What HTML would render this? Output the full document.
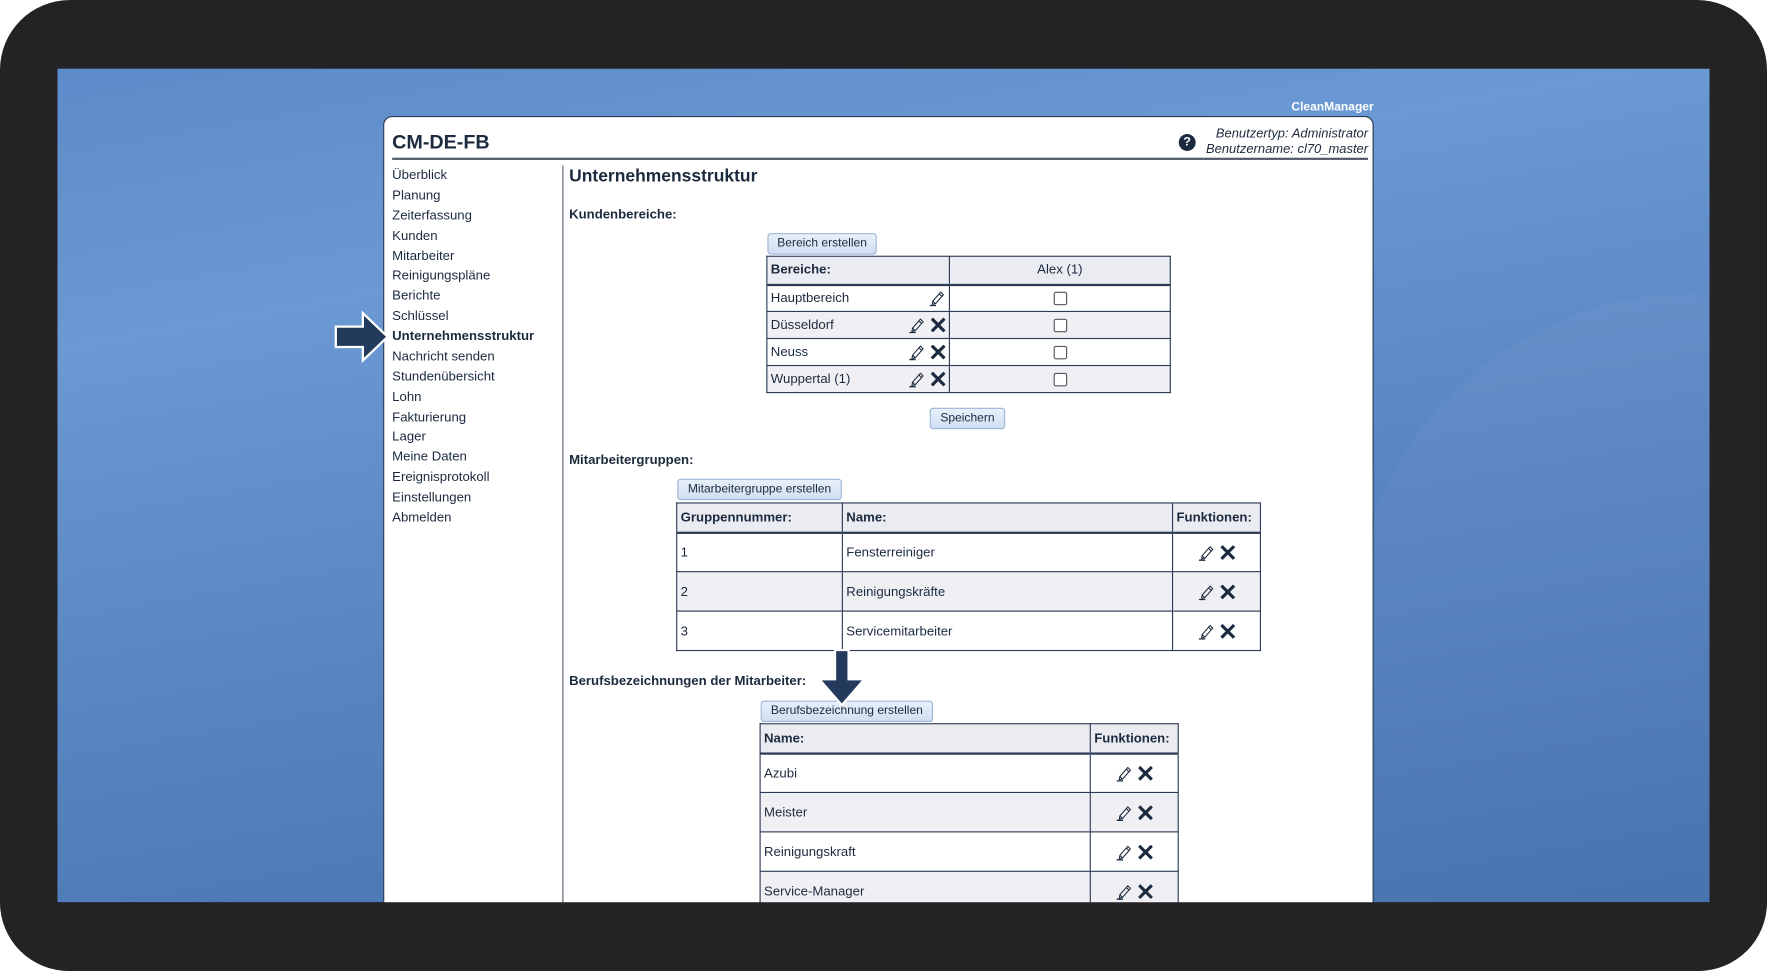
<!DOCTYPE html>
<html><head><meta charset="utf-8"><style>
html,body{margin:0;padding:0;background:#fff;width:1767px;height:971px;overflow:hidden}
#s{position:absolute;left:0;top:0;width:1568px;height:862px;overflow:hidden;transform:scale(1.12691,1.12645);transform-origin:0 0;font-family:"Liberation Sans",sans-serif;color:#1c2a3e}
.a{position:absolute}
.frame{left:0;top:0;width:1568px;height:862px;background:#232224;border-radius:62px}
.blue{left:51px;top:61px;width:1466px;height:740px;overflow:hidden;background:linear-gradient(170deg,#5d8bc9 0%,#6b99d3 25%,#5a86c3 55%,#426fad 100%)}
.panel{left:340px;top:103px;width:877px;height:720px;background:#fff;border:1px solid #2b3a55;border-radius:8px 8px 0 0}
.nav{left:348px;font-size:11.7px}
.btn{position:absolute;font-size:10.7px;background:linear-gradient(#e8f0fa,#cfdff2);border:1px solid #9bb5d6;border-radius:3px;text-align:center;line-height:17px;color:#1c2a3e}
.h{font-size:11.7px;font-weight:bold}
table{position:absolute;border-collapse:collapse;font-size:11.7px}
td{border:1px solid #2b3a55;padding:0 3px}
tr.hd td{background:#ebecf2;font-weight:bold;border-bottom:2px solid #2b3a55}
.g td{background:#f0f0f4}
.ic{display:inline-block;vertical-align:middle}
.p{display:inline-block;vertical-align:middle;width:15px;height:15px}
.x{display:inline-block;vertical-align:middle;width:13px;height:13px;margin-left:5px}
.fl{display:flex;align-items:center;justify-content:space-between}
</style></head><body>
<svg width="0" height="0" style="position:absolute"><defs>
<symbol id="pen" viewBox="0 0 16 16"><path d="M4 11L11.5 2.5L14 5L6.5 13.5L3.5 14Z M10 4L12.5 6.5 M4 11L6.5 13.5" fill="none" stroke="#1c2a3e" stroke-width="1"/><path d="M1 15.2H7" stroke="#1c2a3e" stroke-width="1.3"/></symbol>
<symbol id="xx" viewBox="0 0 14 14"><path d="M2 2L12 12M12 2L2 12" stroke="#1c2a3e" stroke-width="3" stroke-linecap="square"/></symbol>
</defs></svg>
<div id="s">
<div class="a frame"></div>
<div class="a blue">
<div class="a" style="left:1150px;top:200px;width:600px;height:900px;border-radius:300px 300px 0 0;background:rgba(255,255,255,0.03)"></div>
</div>
<div class="a" style="left:1100px;top:89px;width:119px;text-align:right;color:#fff;font-weight:bold;font-size:10.7px">CleanManager</div>
<div class="a panel"></div>
<div class="a" style="left:348px;top:116px;font-size:17.5px;font-weight:bold">CM-DE-FB</div>
<div class="a" style="left:348px;top:140px;width:866px;height:2px;background:#555d6b"></div>
<div class="a" style="left:1046px;top:119px;width:15px;height:15px;border-radius:50%;background:#1c2a3e;color:#fff;font-size:11px;font-weight:bold;text-align:center;line-height:15px">?</div>
<div class="a" style="left:1000px;top:112px;width:214px;text-align:right;font-style:italic;font-size:11.5px;line-height:14px">Benutzertyp: Administrator<br>Benutzername: cl70_master</div>
<div class="a" style="left:499px;top:147px;width:1px;height:660px;background:#555d6b"></div>
<div class="a nav" style="top:147px;line-height:17.87px">Überblick<br>Planung<br>Zeiterfassung<br>Kunden<br>Mitarbeiter<br>Reinigungspläne<br>Berichte<br>Schlüssel<br><b>Unternehmensstruktur</b><br>Nachricht senden<br>Stundenübersicht<br>Lohn<br>Fakturierung<br>Lager<br>Meine Daten<br>Ereignisprotokoll<br>Einstellungen<br>Abmelden</div>
<svg class="a" style="left:295px;top:275px" width="52" height="48"><path d="M3 15H27V3L49 24L27 45V33H3Z" fill="#243a5c" stroke="#fff" stroke-width="2"/></svg>
<div class="a" style="left:505px;top:148px;font-size:15.5px;font-weight:bold">Unternehmensstruktur</div>
<div class="a h" style="left:505px;top:184px">Kundenbereiche:</div>
<div class="btn" style="left:681px;top:207px;width:95px">Bereich erstellen</div>
<table style="left:680px;top:227px;width:359px">
<tr class="hd" style="height:25px"><td style="width:155px">Bereiche:</td><td style="text-align:center;font-weight:normal">Alex (1)</td></tr>
<tr style="height:24px"><td><div class="fl"><span>Hauptbereich</span><span><svg class="p"><use href="#pen"/></svg></span></div></td><td align="center"><span class="ic" style="width:10px;height:10px;border:1px solid #555;border-radius:2px"></span></td></tr>
<tr class="g" style="height:24px"><td><div class="fl"><span>Düsseldorf</span><span><svg class="p"><use href="#pen"/></svg><svg class="x"><use href="#xx"/></svg></span></div></td><td align="center"><span class="ic" style="width:10px;height:10px;border:1px solid #555;border-radius:2px;background:#fff"></span></td></tr>
<tr style="height:24px"><td><div class="fl"><span>Neuss</span><span><svg class="p"><use href="#pen"/></svg><svg class="x"><use href="#xx"/></svg></span></div></td><td align="center"><span class="ic" style="width:10px;height:10px;border:1px solid #555;border-radius:2px"></span></td></tr>
<tr class="g" style="height:24px"><td><div class="fl"><span>Wuppertal (1)</span><span><svg class="p"><use href="#pen"/></svg><svg class="x"><use href="#xx"/></svg></span></div></td><td align="center"><span class="ic" style="width:10px;height:10px;border:1px solid #555;border-radius:2px;background:#fff"></span></td></tr>
</table>
<div class="btn" style="left:825px;top:362px;width:65px">Speichern</div>
<div class="a h" style="left:505px;top:402px">Mitarbeitergruppen:</div>
<div class="btn" style="left:601px;top:425px;width:144px">Mitarbeitergruppe erstellen</div>
<table style="left:600px;top:446px;width:519px">
<tr class="hd" style="height:26px"><td style="width:140px">Gruppennummer:</td><td style="width:286px">Name:</td><td>Funktionen:</td></tr>
<tr style="height:35px"><td>1</td><td>Fensterreiniger</td><td align="center"><svg class="p"><use href="#pen"/></svg><svg class="x"><use href="#xx"/></svg></td></tr>
<tr class="g" style="height:35px"><td>2</td><td>Reinigungskräfte</td><td align="center"><svg class="p"><use href="#pen"/></svg><svg class="x"><use href="#xx"/></svg></td></tr>
<tr style="height:35px"><td>3</td><td>Servicemitarbeiter</td><td align="center"><svg class="p"><use href="#pen"/></svg><svg class="x"><use href="#xx"/></svg></td></tr>
</table>
<div class="a h" style="left:505px;top:598px">Berufsbezeichnungen der Mitarbeiter:</div>
<div class="btn" style="left:675px;top:622px;width:151px">Berufsbezeichnung erstellen</div>
<table style="left:674px;top:642px;width:372px">
<tr class="hd" style="height:26px"><td style="width:286px">Name:</td><td>Funktionen:</td></tr>
<tr style="height:35px"><td>Azubi</td><td align="center"><svg class="p"><use href="#pen"/></svg><svg class="x"><use href="#xx"/></svg></td></tr>
<tr class="g" style="height:35px"><td>Meister</td><td align="center"><svg class="p"><use href="#pen"/></svg><svg class="x"><use href="#xx"/></svg></td></tr>
<tr style="height:35px"><td>Reinigungskraft</td><td align="center"><svg class="p"><use href="#pen"/></svg><svg class="x"><use href="#xx"/></svg></td></tr>
<tr class="g" style="height:35px"><td>Service-Manager</td><td align="center"><svg class="p"><use href="#pen"/></svg><svg class="x"><use href="#xx"/></svg></td></tr>
</table>
<svg class="a" style="left:724px;top:576px" width="46" height="52"><path d="M17 1H29V27H43L23 50L3 27H17Z" fill="#243a5c" stroke="#fff" stroke-width="2"/></svg>
<div class="a" style="left:0;top:801px;width:1568px;height:61px;background:#232224;border-radius:0 0 62px 62px"></div>
</div></body></html>
